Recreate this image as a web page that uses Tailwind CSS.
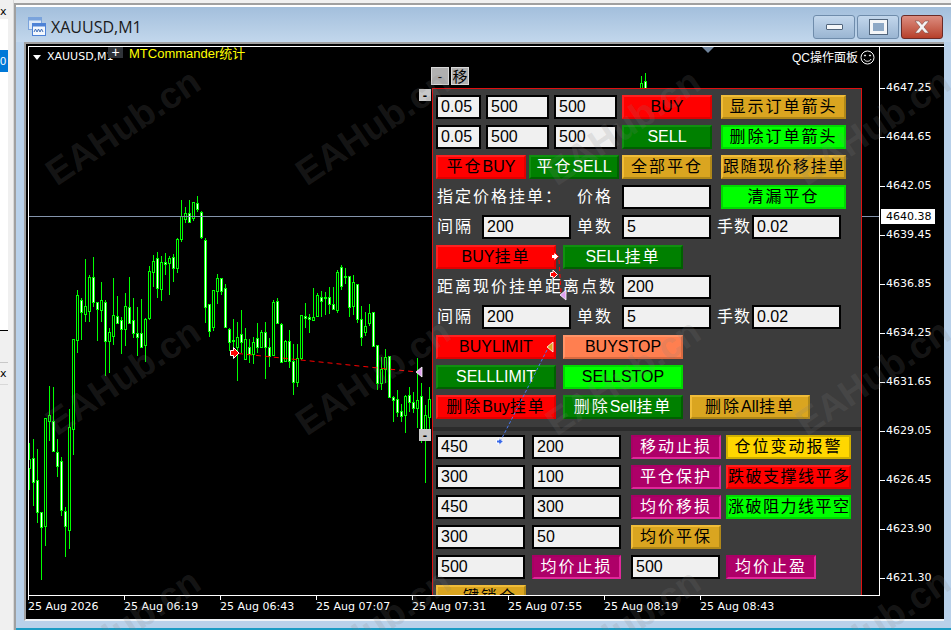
<!DOCTYPE html>
<html lang="en">
<head>
  <meta charset="UTF-8" />
  <title>XAUUSD,M1</title>
  <script src="https://cdn.jsdelivr.net/npm/@tailwindcss/browser@4"></script>
</head>
<body class="relative flex h-[630px] w-[951px] overflow-hidden bg-[#f0f0f0] font-['Liberation_Sans','Noto_Sans_CJK_SC',sans-serif]">

  <!-- Left edge of the terminal: navigator panels cut off by the window -->
  <div class="flex h-full w-[14px] shrink-0 flex-col border-r border-[#d8d8d8]">
    <div class="h-[19px] w-[8px] pl-0 pt-[6px] font-['DejaVu_Sans',sans-serif] text-[11px] leading-none text-black overflow-hidden">x</div>
    <div class="h-[31px] w-[8px] bg-white"></div>
    <div class="flex h-[22px] w-[8px] items-center bg-[#0078d7] text-[11px] leading-none text-white overflow-hidden">0</div>
    <div class="h-[259px] w-[8px] border-b border-black bg-white"></div>
    <div class="h-[32px] w-[8px] border-b border-[#c8c8c8]"></div>
    <div class="h-[21px] w-[8px] pt-[5px] font-['DejaVu_Sans',sans-serif] text-[11px] leading-none text-black overflow-hidden">x</div>
    <div class="flex-1 w-[8px] border-t border-[#d8d8d8]"></div>
  </div>

  <!-- Chart window -->
  <div class="mt-[3px] flex h-[627px] flex-1 flex-col border-l-2 border-t-2 border-[#a0a0a0] bg-[#b9d1ea]">
    <div class="flex h-[37px] shrink-0 items-center border-t-2 border-white bg-linear-to-b from-[#a3bfdc] to-[#c2d7ec] pl-[11px] pr-[8px] pt-[3px]">
      <svg class="h-[20px] w-[20px] shrink-0" viewBox="0 0 20 20">
        <rect x="1.5" y="1.5" width="13" height="12" fill="#dbe8f7" stroke="#7aa3dc" />
        <rect x="1.5" y="1.5" width="13" height="3" fill="#7aa3dc" />
        <rect x="5.5" y="7.5" width="13" height="12" fill="#f4f8fd" stroke="#4d82d6" />
        <rect x="5.5" y="7.5" width="13" height="3" fill="#4d82d6" />
        <path d="M7 16 l1.5-3 1.5 3 1.5-3 1.5 3 1.5-3 1.5 3" fill="none" stroke="#3f6fb8" />
      </svg>
      <span class="ml-[4px] mt-[2px] font-['Open_Sans',sans-serif] text-[16px] leading-none text-[#1a1a1a]">XAUUSD,M1</span>
      <div class="ml-auto flex gap-[2px] pt-[1px]">
        <button class="flex h-[24px] w-[42px] items-center justify-center rounded-[3px] border border-[#6f8cab] bg-linear-to-b from-[#c3d7ec] to-[#9ab5d2]">
          <span class="h-[6px] w-[17px] rounded-[1px] border border-[#51657c] bg-[#f4f6f8]"></span>
        </button>
        <button class="flex h-[24px] w-[42px] items-center justify-center rounded-[3px] border border-[#6f8cab] bg-linear-to-b from-[#c3d7ec] to-[#9ab5d2]">
          <span class="h-[14px] w-[17px] border-[3px] border-[#f4f6f8] bg-[#8ea9c6] outline outline-[#51657c]"></span>
        </button>
        <button class="flex h-[24px] w-[42px] items-center justify-center rounded-[3px] border border-[#6b2a26] bg-linear-to-b from-[#dc8d80] to-[#b63f2a]">
          <svg class="h-[14px] w-[18px]" viewBox="0 0 18 14"><path d="M2 1h4l3 3.5L12 1h4l-5 6 5 6h-4L9 9.5 6 13H2l5-6z" fill="#f4f4f4" stroke="#7d4a44" stroke-width=".6" /></svg>
        </button>
      </div>
    </div>

    <div class="ml-[8px] mr-[7px] flex h-[579px] shrink-0 flex-col border-l-2 border-t-2 border-b-2 border-[#a0a0a0] border-b-[#eef2f6] bg-black pl-[2px] pt-[2px]">
      <div class="flex min-h-0 flex-1 border-t border-white">
        <!-- Plot -->
        <div class="relative h-[549px] w-[852px] shrink-0 overflow-hidden border-b border-l border-r border-white">
          <svg id="candles" class="absolute left-0 top-0" width="851" height="548" viewBox="29 47 851 548" shape-rendering="crispEdges"></svg>

          <div class="absolute left-0 right-0 top-[169px] h-px bg-[#8494ac]"></div>
          <div class="absolute left-[673px] top-0 h-0 w-0 border-x-[6px] border-t-[6px] border-x-transparent border-t-[#70849c]"></div>

          <div class="absolute left-[4px] top-[8px] h-0 w-0 border-x-[4px] border-t-[5px] border-x-transparent border-t-white"></div>
          <span class="absolute left-[18px] top-[3px] font-['DejaVu_Sans',sans-serif] text-[11px] leading-[14px] text-white">XAUUSD,M1</span>
          <div class="absolute left-[79px] top-[-1px] flex h-[12px] w-[15px] items-center justify-center bg-[#2f3338] text-[14px] leading-none text-white">+</div>
          <span class="absolute left-[100px] top-0 text-[13px] leading-[13px] text-[#ffff00]">MTCommander统计</span>
          <span class="absolute left-[763px] top-[3px] text-[12px] leading-[16px] text-white">QC操作面板</span>
          <svg class="absolute left-[831px] top-[3px] h-[15px] w-[15px]" viewBox="0 0 15 15" fill="none" stroke="#fff">
            <circle cx="7.5" cy="7.5" r="6.5" /><path d="M4 9c1 3 6 3 7 0" />
            <circle cx="5" cy="5.5" r=".6" fill="#fff" /><circle cx="10" cy="5.5" r=".6" fill="#fff" />
          </svg>

          <!-- small collapse buttons -->
          <button class="absolute left-[402px] top-[20px] flex h-[18px] w-[18px] items-center justify-center border border-[#d8d8d8] bg-[#b0b0b0] text-[13px] leading-none text-black">-</button>
          <button class="absolute left-[422px] top-[20px] flex h-[18px] w-[18px] items-center justify-center border border-[#d8d8d8] bg-[#b0b0b0] text-[15px] leading-none text-black">移</button>
          <button class="absolute left-[390px] top-[42px] z-10 flex h-[12px] w-[12px] items-center justify-center bg-[#c8c8c8] text-[13px] font-bold leading-none text-black">-</button>
          <button class="absolute left-[390px] top-[382px] z-10 flex h-[12px] w-[12px] items-center justify-center bg-[#c8c8c8] text-[13px] font-bold leading-none text-black">-</button>

          <!-- Control panel -->
          <div class="absolute left-[403px] top-[41px] h-[520px] w-[430px] border-x border-t border-[#e01010] bg-[#3c3c3c] pt-[6px] text-[16px] leading-none">
            <div class="flex flex-col gap-[6px]">
              <div class="flex h-[24px] pl-[3px]">
                <input readonly value="0.05" class="h-[24px] w-[45px] border-2 border-black bg-[#f0f0f0] px-[3px] text-black" />
                <input readonly value="500" class="ml-[5px] h-[24px] w-[63px] border-2 border-black bg-[#f0f0f0] px-[3px] text-black" />
                <input readonly value="500" class="ml-[5px] h-[24px] w-[63px] border-2 border-black bg-[#f0f0f0] px-[3px] text-black" />
                <button class="ml-[5px] h-[24px] w-[90px] border-2 border-[#e00000] border-t-[#ff2020] border-l-[#ff2020] bg-[#ff0000] text-black">BUY</button>
                <button class="ml-[9px] h-[24px] w-[125px] whitespace-nowrap border-2 border-[#b08818] border-t-[#f0bc38] border-l-[#f0bc38] bg-[#daa520] tracking-[2px] text-black">显示订单箭头</button>
              </div>
              <div class="flex h-[24px] pl-[3px]">
                <input readonly value="0.05" class="h-[24px] w-[45px] border-2 border-black bg-[#f0f0f0] px-[3px] text-black" />
                <input readonly value="500" class="ml-[5px] h-[24px] w-[63px] border-2 border-black bg-[#f0f0f0] px-[3px] text-black" />
                <input readonly value="500" class="ml-[5px] h-[24px] w-[63px] border-2 border-black bg-[#f0f0f0] px-[3px] text-black" />
                <button class="ml-[5px] h-[24px] w-[90px] border-2 border-[#006000] border-t-[#109010] border-l-[#109010] bg-[#008000] text-white">SELL</button>
                <button class="ml-[9px] h-[24px] w-[125px] whitespace-nowrap border-2 border-[#00d800] bg-[#00ff00] tracking-[2px] text-black">删除订单箭头</button>
              </div>
              <div class="flex h-[24px] pl-[3px]">
                <button class="h-[24px] w-[90px] whitespace-nowrap border-2 border-[#e00000] border-t-[#ff2020] border-l-[#ff2020] bg-[#ff0000] text-black"><span class="tracking-[2px]">平仓</span>BUY</button>
                <button class="ml-[3px] h-[24px] w-[90px] whitespace-nowrap border-2 border-[#006000] border-t-[#109010] border-l-[#109010] bg-[#008000] text-white"><span class="tracking-[2px]">平仓</span>SELL</button>
                <button class="ml-[3px] h-[24px] w-[90px] whitespace-nowrap border-2 border-[#b08818] border-t-[#f0bc38] border-l-[#f0bc38] bg-[#daa520] tracking-[2px] text-black">全部平仓</button>
                <button class="ml-[9px] h-[24px] w-[125px] whitespace-nowrap border-2 border-[#b08818] border-t-[#f0bc38] border-l-[#f0bc38] bg-[#daa520] tracking-[1.5px] text-black">跟随现价移挂单</button>
              </div>
              <div class="flex h-[24px] items-center pl-[3px] text-white">
                <span class="w-[141px] whitespace-nowrap pl-[1px] tracking-[2px]">指定价格挂单：</span>
                <span class="w-[45px] whitespace-nowrap tracking-[2px]">价格</span>
                <input readonly value="" class="h-[24px] w-[89px] border-2 border-black bg-[#f0f0f0] px-[3px] text-black" />
                <button class="ml-[10px] h-[24px] w-[125px] whitespace-nowrap border-2 border-[#00d800] bg-[#00ff00] tracking-[2px] text-black">清漏平仓</button>
              </div>
              <div class="flex h-[24px] items-center pl-[3px] text-white">
                <span class="w-[46px] whitespace-nowrap pl-[1px] tracking-[2px]">间隔</span>
                <input readonly value="200" class="h-[24px] w-[89px] border-2 border-black bg-[#f0f0f0] px-[3px] text-black" />
                <span class="w-[51px] whitespace-nowrap pl-[6px] tracking-[2px]">单数</span>
                <input readonly value="5" class="h-[24px] w-[89px] border-2 border-black bg-[#f0f0f0] px-[3px] text-black" />
                <span class="w-[41px] whitespace-nowrap pl-[6px] tracking-[1px]">手数</span>
                <input readonly value="0.02" class="h-[24px] w-[89px] border-2 border-black bg-[#f0f0f0] px-[3px] text-black" />
              </div>
              <div class="flex h-[24px] pl-[3px]">
                <button class="h-[24px] w-[120px] whitespace-nowrap border-2 border-[#e00000] border-t-[#ff2020] border-l-[#ff2020] bg-[#ff0000] text-black">BUY<span class="tracking-[2px]">挂单</span></button>
                <button class="ml-[7px] h-[24px] w-[120px] whitespace-nowrap border-2 border-[#006000] border-t-[#109010] border-l-[#109010] bg-[#008000] text-white">SELL<span class="tracking-[2px]">挂单</span></button>
              </div>
              <div class="flex h-[24px] items-center pl-[3px] text-white">
                <span class="w-[186px] whitespace-nowrap pl-[1px] tracking-[2px]">距离现价挂单距离点数</span>
                <input readonly value="200" class="h-[24px] w-[89px] border-2 border-black bg-[#f0f0f0] px-[3px] text-black" />
              </div>
              <div class="flex h-[24px] items-center pl-[3px] text-white">
                <span class="w-[46px] whitespace-nowrap pl-[1px] tracking-[2px]">间隔</span>
                <input readonly value="200" class="h-[24px] w-[89px] border-2 border-black bg-[#f0f0f0] px-[3px] text-black" />
                <span class="w-[51px] whitespace-nowrap pl-[6px] tracking-[2px]">单数</span>
                <input readonly value="5" class="h-[24px] w-[89px] border-2 border-black bg-[#f0f0f0] px-[3px] text-black" />
                <span class="w-[41px] whitespace-nowrap pl-[6px] tracking-[1px]">手数</span>
                <input readonly value="0.02" class="h-[24px] w-[89px] border-2 border-black bg-[#f0f0f0] px-[3px] text-black" />
              </div>
              <div class="flex h-[24px] pl-[3px]">
                <button class="h-[24px] w-[120px] border-2 border-[#e00000] border-t-[#ff2020] border-l-[#ff2020] bg-[#ff0000] text-black">BUYLIMIT</button>
                <button class="ml-[7px] h-[24px] w-[120px] border-2 border-[#d86a40] border-t-[#ff9468] border-l-[#ff9468] bg-[#ff7f50] text-black">BUYSTOP</button>
              </div>
              <div class="flex h-[24px] pl-[3px]">
                <button class="h-[24px] w-[120px] border-2 border-[#006000] border-t-[#109010] border-l-[#109010] bg-[#008000] text-white">SELLLIMIT</button>
                <button class="ml-[7px] h-[24px] w-[120px] border-2 border-[#00d800] bg-[#00ff00] text-black">SELLSTOP</button>
              </div>
              <div class="flex h-[24px] pl-[3px]">
                <button class="h-[24px] w-[120px] whitespace-nowrap border-2 border-[#e00000] border-t-[#ff2020] border-l-[#ff2020] bg-[#ff0000] text-black"><span class="tracking-[2px]">删除</span>Buy<span class="tracking-[2px]">挂单</span></button>
                <button class="ml-[7px] h-[24px] w-[120px] whitespace-nowrap border-2 border-[#006000] border-t-[#109010] border-l-[#109010] bg-[#008000] text-white"><span class="tracking-[2px]">删除</span>Sell<span class="tracking-[2px]">挂单</span></button>
                <button class="ml-[7px] h-[24px] w-[120px] whitespace-nowrap border-2 border-[#b08818] border-t-[#f0bc38] border-l-[#f0bc38] bg-[#daa520] text-black"><span class="tracking-[2px]">删除</span>All<span class="tracking-[2px]">挂单</span></button>
              </div>
            </div>

            <div class="mb-[4px] mt-[8px] h-[4px] bg-[#2b2b2b]"></div>

            <div class="flex flex-col gap-[6px]">
              <div class="flex h-[24px] pl-[3px]">
                <input readonly value="450" class="h-[24px] w-[89px] border-2 border-black bg-[#f0f0f0] px-[3px] text-black" />
                <input readonly value="200" class="ml-[7px] h-[24px] w-[89px] border-2 border-black bg-[#f0f0f0] px-[3px] text-black" />
                <button class="ml-[10px] h-[24px] w-[90px] whitespace-nowrap border-2 border-[#e0289a] border-t-[#a80064] border-l-[#a80064] bg-[#ae0068] tracking-[2px] text-white">移动止损</button>
                <button class="ml-[5px] h-[24px] w-[125px] whitespace-nowrap border-2 border-[#d0b000] bg-[#ffd700] tracking-[2px] text-black">仓位变动报警</button>
              </div>
              <div class="flex h-[24px] pl-[3px]">
                <input readonly value="300" class="h-[24px] w-[89px] border-2 border-black bg-[#f0f0f0] px-[3px] text-black" />
                <input readonly value="100" class="ml-[7px] h-[24px] w-[89px] border-2 border-black bg-[#f0f0f0] px-[3px] text-black" />
                <button class="ml-[10px] h-[24px] w-[90px] whitespace-nowrap border-2 border-[#e0289a] border-t-[#a80064] border-l-[#a80064] bg-[#ae0068] tracking-[2px] text-white">平仓保护</button>
                <button class="ml-[5px] h-[24px] w-[125px] whitespace-nowrap border-2 border-[#e00000] border-t-[#ff2020] border-l-[#ff2020] bg-[#ff0000] tracking-[1.5px] text-black">跌破支撑线平多</button>
              </div>
              <div class="flex h-[24px] pl-[3px]">
                <input readonly value="450" class="h-[24px] w-[89px] border-2 border-black bg-[#f0f0f0] px-[3px] text-black" />
                <input readonly value="300" class="ml-[7px] h-[24px] w-[89px] border-2 border-black bg-[#f0f0f0] px-[3px] text-black" />
                <button class="ml-[10px] h-[24px] w-[90px] whitespace-nowrap border-2 border-[#e0289a] border-t-[#a80064] border-l-[#a80064] bg-[#ae0068] tracking-[2px] text-white">均价移损</button>
                <button class="ml-[5px] h-[24px] w-[125px] whitespace-nowrap border-2 border-[#00d800] bg-[#00ff00] tracking-[1.5px] text-black">涨破阻力线平空</button>
              </div>
              <div class="flex h-[24px] pl-[3px]">
                <input readonly value="300" class="h-[24px] w-[89px] border-2 border-black bg-[#f0f0f0] px-[3px] text-black" />
                <input readonly value="50" class="ml-[7px] h-[24px] w-[89px] border-2 border-black bg-[#f0f0f0] px-[3px] text-black" />
                <button class="ml-[10px] h-[24px] w-[90px] whitespace-nowrap border-2 border-[#b08818] border-t-[#f0bc38] border-l-[#f0bc38] bg-[#daa520] tracking-[2px] text-black">均价平保</button>
              </div>
              <div class="flex h-[24px] pl-[3px]">
                <input readonly value="500" class="h-[24px] w-[89px] border-2 border-black bg-[#f0f0f0] px-[3px] text-black" />
                <button class="ml-[7px] h-[24px] w-[89px] whitespace-nowrap border-2 border-[#e0289a] border-t-[#a80064] border-l-[#a80064] bg-[#ae0068] tracking-[2px] text-white">均价止损</button>
                <input readonly value="500" class="ml-[10px] h-[24px] w-[89px] border-2 border-black bg-[#f0f0f0] px-[3px] text-black" />
                <button class="ml-[6px] h-[24px] w-[90px] whitespace-nowrap border-2 border-[#e0289a] border-t-[#a80064] border-l-[#a80064] bg-[#ae0068] tracking-[2px] text-white">均价止盈</button>
              </div>
              <div class="flex h-[24px] pl-[3px]">
                <button class="h-[24px] w-[90px] whitespace-nowrap border-2 border-[#b08818] border-t-[#f0bc38] border-l-[#f0bc38] bg-[#daa520] tracking-[2px] text-black">一键锁仓</button>
              </div>
            </div>
          </div>

          <!-- Order arrows drawn on top of the panel -->
          <svg class="absolute left-0 top-0 z-20" width="851" height="548" viewBox="29 47 851 548" fill="none">
            <path d="M238 353.5L417 372" stroke="#ff0000" stroke-dasharray="5 4" />
            <path d="M559 260L561 292" stroke="#ff0000" stroke-dasharray="4 3" />
            <path d="M547 350L501 440" stroke="#4a78f0" stroke-dasharray="3 2" />
            <path d="M230.5 350.5h3v-3l5.5 5.5-5.500 5.500v-3h-3z" fill="#ff0000" stroke="#fff" />
            <path d="M551.500 254.500h2.500v-2.500l4.500 4.500-4.500 4.500v-2.500h-2.500z" fill="#fff" stroke="#ff0000" />
            <path d="M550.500 272.500h2.500v-2.500l4.500 4.500-4.500 4.500v-2.500h-2.500z" fill="#ff0000" stroke="#fff" />
            <path d="M496.500 440h2.500v-2.500l4 4-4 4v-2.500h-2.500z" fill="#3a6ae8" stroke="#fff" />
            <path d="M422 367v10l-6-5z" fill="#e0a0f0" stroke="#fff" stroke-width=".8" />
            <path d="M566 290v10l-6-5z" fill="#e0a0f0" stroke="#fff" stroke-width=".8" />
            <path d="M553 342v10l-6-5z" fill="#daa520" stroke="#fff" stroke-width=".8" />
          </svg>
        </div>

        <!-- Price axis -->
        <div class="relative flex-1">
          <div class="flex flex-col pt-[34px] font-['DejaVu_Sans',sans-serif] text-[11px] leading-[14px] text-white">
            <div class="flex h-[14px] items-center"><span class="h-px w-[5px] bg-white"></span><span class="ml-[1px]">4647.25</span></div>
            <div class="mt-[35px] flex h-[14px] items-center"><span class="h-px w-[5px] bg-white"></span><span class="ml-[1px]">4644.65</span></div>
            <div class="mt-[35px] flex h-[14px] items-center"><span class="h-px w-[5px] bg-white"></span><span class="ml-[1px]">4642.05</span></div>
            <div class="mt-[35px] flex h-[14px] items-center"><span class="h-px w-[5px] bg-white"></span><span class="ml-[1px]">4639.45</span></div>
            <div class="mt-[35px] flex h-[14px] items-center"><span class="h-px w-[5px] bg-white"></span><span class="ml-[1px]">4636.85</span></div>
            <div class="mt-[35px] flex h-[14px] items-center"><span class="h-px w-[5px] bg-white"></span><span class="ml-[1px]">4634.25</span></div>
            <div class="mt-[35px] flex h-[14px] items-center"><span class="h-px w-[5px] bg-white"></span><span class="ml-[1px]">4631.65</span></div>
            <div class="mt-[35px] flex h-[14px] items-center"><span class="h-px w-[5px] bg-white"></span><span class="ml-[1px]">4629.05</span></div>
            <div class="mt-[35px] flex h-[14px] items-center"><span class="h-px w-[5px] bg-white"></span><span class="ml-[1px]">4626.45</span></div>
            <div class="mt-[35px] flex h-[14px] items-center"><span class="h-px w-[5px] bg-white"></span><span class="ml-[1px]">4623.90</span></div>
            <div class="mt-[35px] flex h-[14px] items-center"><span class="h-px w-[5px] bg-white"></span><span class="ml-[1px]">4621.30</span></div>
          </div>
          <span class="absolute left-[1px] top-[162px] h-[15px] w-[54px] bg-white pl-[5px] font-['DejaVu_Sans',sans-serif] text-[11px] leading-[15px] text-black">4640.38</span>
        </div>
      </div>

      <!-- Time axis -->
      <div class="flex h-[24px] shrink-0 font-['DejaVu_Sans',sans-serif] text-[11px] leading-[14px] text-white">
        <div class="w-[96px] shrink-0"><span class="block h-[5px] w-px bg-white"></span><span class="block whitespace-nowrap">25 Aug 2026</span></div>
        <div class="w-[96px] shrink-0"><span class="block h-[5px] w-px bg-white"></span><span class="block whitespace-nowrap">25 Aug 06:19</span></div>
        <div class="w-[96px] shrink-0"><span class="block h-[5px] w-px bg-white"></span><span class="block whitespace-nowrap">25 Aug 06:43</span></div>
        <div class="w-[96px] shrink-0"><span class="block h-[5px] w-px bg-white"></span><span class="block whitespace-nowrap">25 Aug 07:07</span></div>
        <div class="w-[96px] shrink-0"><span class="block h-[5px] w-px bg-white"></span><span class="block whitespace-nowrap">25 Aug 07:31</span></div>
        <div class="w-[96px] shrink-0"><span class="block h-[5px] w-px bg-white"></span><span class="block whitespace-nowrap">25 Aug 07:55</span></div>
        <div class="w-[96px] shrink-0"><span class="block h-[5px] w-px bg-white"></span><span class="block whitespace-nowrap">25 Aug 08:19</span></div>
        <div class="w-[96px] shrink-0"><span class="block h-[5px] w-px bg-white"></span><span class="block whitespace-nowrap">25 Aug 08:43</span></div>
      </div>
    </div>
    <div class="mt-auto h-[2px] bg-[#1c9cc4]"></div>
  </div>

  <!-- Site watermark, over everything -->
  <div id="marks" class="pointer-events-none absolute inset-0 z-30 overflow-hidden"></div>

  <script>
    // [high, low, bodyTop, bodyBottom, solid] in page pixels, one bar every 4px from x=29
    const bars = [
      [443,490,459,468,0],[439,506,458,482,1],[449,523,480,512,1],[512,580,512,527,1],[418,546,418,526,0],
      [386,441,415,421,0],[387,452,421,451,1],[439,477,452,466,1],[457,516,461,510,1],[507,557,511,526,1],
      [409,549,427,530,0],[339,455,339,429,0],[290,353,295,340,0],[298,340,300,312,1],[259,322,306,314,0],
      [275,322,277,311,0],[257,307,277,302,1],[302,341,302,309,1],[282,322,300,310,0],[300,376,302,341,1],
      [328,373,332,341,0],[278,345,315,336,0],[296,323,316,323,1],[317,354,320,329,1],[293,346,306,329,0],
      [277,323,307,323,1],[298,338,320,333,1],[307,356,333,337,1],[299,348,333,347,1],[318,362,319,345,0],
      [266,320,271,318,0],[255,287,261,272,0],[252,298,258,288,1],[256,301,262,289,0],[253,275,262,264,1],
      [256,295,258,263,0],[254,282,257,268,1],[238,273,239,268,0],[200,242,216,239,0],[207,223,213,219,0],
      [200,222,213,222,1],[202,221,202,218,0],[196,212,203,209,1],[211,239,212,237,1],[238,323,240,307,1],
      [304,337,304,331,1],[290,331,290,327,0],[274,304,278,291,0],[278,295,278,291,1],[284,327,288,327,1],
      [328,351,329,342,1],[319,355,340,341,1],[322,381,337,347,0],[310,353,334,342,1],[328,360,339,359,0],
      [339,363,347,354,1],[337,364,342,354,0],[323,353,338,347,1],[330,347,332,347,0],[322,379,332,347,1],
      [338,367,347,356,1],[300,355,302,355,0],[298,324,301,323,1],[323,363,324,362,1],[340,362,341,361,0],
      [330,368,341,361,1],[344,395,361,382,1],[344,387,358,382,0],[315,360,315,358,0],[303,328,316,318,1],
      [314,333,317,319,1],[288,321,317,320,0],[293,317,295,316,0],[291,317,297,301,1],[292,315,297,298,1],
      [287,314,297,304,1],[287,310,304,309,1],[270,313,272,310,0],[265,290,267,286,1],[268,284,276,277,1],
      [276,317,276,307,1],[275,315,282,306,0],[284,323,284,319,1],[306,346,319,337,1],[312,336,326,332,0],
      [304,326,313,323,0],[312,346,312,346,1],[345,390,345,383,1],[357,390,369,383,0],[349,383,357,369,0],
      [356,397,356,397,1],[396,422,397,400,1],[390,417,399,412,1],[404,422,411,416,1],[395,433,396,415,0],
      [387,412,395,402,1],[392,413,402,408,1],[358,428,400,408,0],[383,443,396,429,1],[405,483,415,429,0],
      [387,429,399,417,0]
    ];
    // the two bars that stick out above the panel
    const extra = [[153,76,88,83,88,0],[154,73,88,81,88,1]];

    let svg = "";
    const drawBar = (i, b) => {
      const x = 29 + i * 4;
      svg += `<line x1="${x + .5}" x2="${x + .5}" y1="${b[0]}" y2="${b[1]}" stroke="#00ff00" />`;
      svg += `<rect x="${x - .5}" y="${b[2] + .5}" width="2" height="${Math.max(b[3] - b[2], 1)}" fill="${b[4] ? "#fff" : "#000"}" stroke="#00ff00" />`;
    };
    bars.forEach((b, i) => drawBar(i, b));
    extra.forEach(e => drawBar(e[0], e.slice(1)));
    document.getElementById("candles").innerHTML = svg;

    let marks = "";
    [-127, 123, 373, 623, 873].forEach(x => {
      [127, 377, 627].forEach(y => {
        marks += `<span class="absolute -translate-x-1/2 -translate-y-1/2 rotate-[-34deg] whitespace-nowrap font-['Liberation_Sans',sans-serif] text-[37px] font-bold leading-none text-[#8080802c]" style="left:${x}px;top:${y}px">EAHub.cn</span>`;
      });
    });
    document.getElementById("marks").innerHTML = marks;
  </script>
</body>
</html>
